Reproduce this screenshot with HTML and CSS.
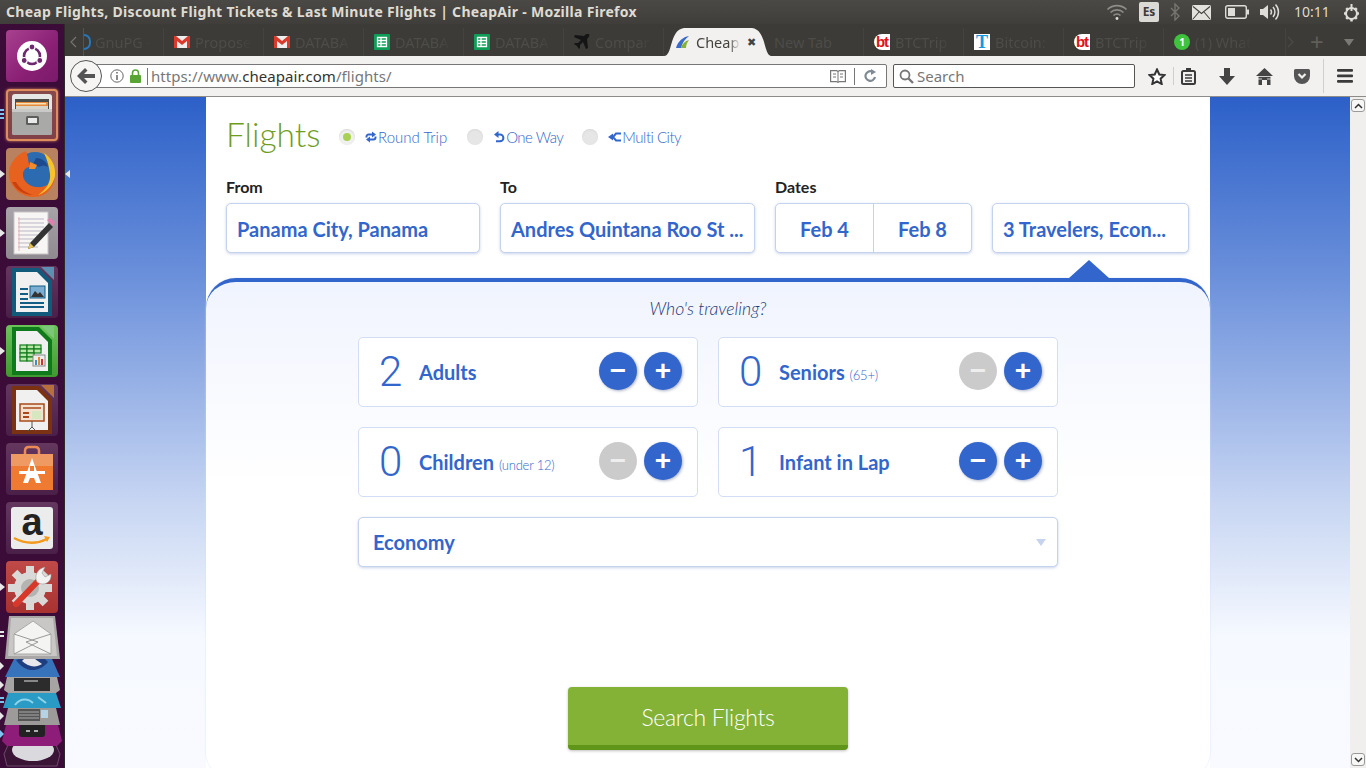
FILE: index.html
```html
<!DOCTYPE html>
<html lang="en">
<head>
<meta charset="utf-8">
<title>Cheap Flights</title>
<link rel="stylesheet" href="styles.css">
</head>
<body>
<div class="desktop">
  <header class="topbar">
    <div class="wintitle">Cheap Flights, Discount Flight Tickets &amp; Last Minute Flights | CheapAir - Mozilla Firefox</div>
    <div class="indicators">
      <svg class="ind-wifi" width="22" height="18" viewBox="0 0 22 18" fill="none" stroke="#8f8d88" stroke-width="1.6"><path d="M1.5 6.5a13.5 13.5 0 0 1 19 0"/><path d="M4.5 9.5a9.3 9.3 0 0 1 13 0"/><path d="M7.5 12.5a5 5 0 0 1 7 0"/><circle cx="11" cy="15.5" r="1.4" fill="#e0ded8" stroke="none"/></svg>
      <span class="ind-es">Es</span>
      <svg class="ind-bt" width="10" height="18" viewBox="0 0 10 18" fill="none" stroke="#77756f" stroke-width="1.4"><path d="M1 5l8 8-4 4V1l4 4-8 8"/></svg>
      <svg class="ind-mail" width="19" height="15" viewBox="0 0 19 15"><rect width="19" height="15" rx="1.5" fill="#e4e2dc"/><path d="M1 1.5l8.500 7 8.500-7M1 14l6-7M18 14l-6-7" fill="none" stroke="#44433f" stroke-width="1.1"/></svg>
      <svg class="ind-bat" width="24" height="14" viewBox="0 0 24 14"><rect x=".7" y=".7" width="20.600" height="12.600" rx="2" fill="none" stroke="#dfddd7" stroke-width="1.400"/><rect x="3" y="3" width="7" height="8" fill="#dfddd7"/><rect x="22" y="4.500" width="2" height="5" fill="#dfddd7"/></svg>
      <svg class="ind-vol" width="21" height="18" viewBox="0 0 21 18" fill="none" stroke="#dfddd7" stroke-width="1.500"><path d="M1 6h3l5-4v14l-5-4H1z" fill="#dfddd7" stroke="none"/><path d="M11.500 6.500a4 4 0 0 1 0 5M14 4a7.500 7.500 0 0 1 0 10M16.500 1.500a11 11 0 0 1 0 15"/></svg>
      <span class="ind-time">10:11</span>
      <svg class="ind-power" width="17" height="19" viewBox="0 0 17 19"><g fill="none" stroke="#dfddd7"><circle cx="8.500" cy="10.500" r="5.500" stroke-width="2"/><path d="M8.500 1v7" stroke-width="2"/></g><g stroke="#dfddd7" stroke-width="2.500"><path d="M8.500 15.500v3M1 10.500h3M13 10.500h3M3.200 5.200l2 2M11.800 13.800l2 2M13.800 5.200l-2 2M5.200 13.800l-2 2"/></g></svg>
    </div>
  </header>

  <div class="workarea">
    <nav class="launcher">
      <div class="lnch tile-ubuntu"><svg viewBox="0 0 52 52"><circle cx="26" cy="26" r="15" fill="#fff"/><circle cx="26" cy="26" r="8" fill="none" stroke="#6e2a6f" stroke-width="2.600"/><g fill="#6e2a6f" stroke="#fff" stroke-width="1.200"><circle cx="26" cy="17" r="3"/><circle cx="18.200" cy="30.500" r="3"/><circle cx="33.800" cy="30.500" r="3"/></g></svg></div>
      <div class="lnch tile-files"><span class="pips pips-blue"></span><svg viewBox="0 0 52 52"><path d="M6 8q0-3 3-3h34q3 0 3 3v13H6z" fill="#e6e6e6"/><rect x="9" y="10" width="34" height="12" fill="#4b4b48"/><rect x="10" y="13" width="32" height="6" fill="#e88a3c"/><rect x="10" y="14" width="30" height="1.500" fill="#f7e2b5"/><rect x="10" y="17" width="32" height="5" fill="#d9d4c8"/><rect x="6" y="20" width="40" height="26" rx="1.500" fill="#a9a9a7"/><rect x="6" y="20" width="40" height="3" fill="#c9c9c7"/><rect x="20" y="27" width="13" height="9" rx="1.500" fill="#5d5d5b"/><rect x="22" y="29" width="9" height="5" fill="#e9e9e9"/></svg></div>
      <div class="lnch tile-ff"><span class="pip-l"></span><span class="pip-r"></span><svg viewBox="0 0 52 52"><circle cx="29" cy="23" r="19" fill="#2d6bb0"/><path d="M30 10c6 0 11 4 12 9-3-2-6-2-9 0l-6-3z" fill="#1d4a8c"/><path d="M20 3C8 8 2 18 3 28c2 13 13 21 25 21 11 0 19-8 21-19-4 6-11 10-19 9-8-1-14-7-13-14 1-4 4-6 7-6-1-3-2-6-2-9z" fill="#e8621f"/><path d="M6 34c4 8 12 13 21 13-7-2-13-6-17-13z" fill="#c9410f"/><path d="M38 5c8 5 12 14 11 23-2 9-8 16-17 19 8-5 13-13 12-21-1-8-3-15-6-21z" fill="#f8c32a"/><path d="M24 14l7 3-2 4-6 0z" fill="#f08a2a"/></svg></div>
      <div class="lnch tile-text"><span class="pip-l"></span><svg viewBox="0 0 52 52"><rect x="8" y="5" width="34" height="42" fill="#f8f6f4" stroke="#c7c3c4"/><g stroke="#b9b7c2" stroke-width="1"><path d="M12 12h26M12 16h26M12 20h26M12 24h24M12 28h20M12 32h16M12 36h12M12 40h20"/></g><path d="M13 10v34" stroke="#e8a7ad" stroke-width=".8"/><path d="M24 36L43 16l4 4-19 20-6 2z" fill="#333"/><path d="M41 13l3-2 5 4-2 4z" fill="#e080ae"/><path d="M22 42l2-6 4 4z" fill="#e7c34d"/></svg></div>
      <div class="lnch tile-dark"><svg viewBox="0 0 52 52"><path d="M6 2h27l13 13v35H6z" fill="#115a7c"/><path d="M10 6h21l11 11v29H10z" fill="#f0f0f0"/><path d="M35 1h13v13z" fill="#5d90b0"/><path d="M14 22h8v2h-8zM14 27h8v2h-8zM14 32h8v2h-8zM14 36h24v2H14zM14 40h24v2H14z" fill="#125d85"/><rect x="24" y="20" width="15" height="12" fill="#7baed0" stroke="#125d85"/><path d="M25 31l4-6 3 3 2-2 4 5z" fill="#333"/></svg></div>
      <div class="lnch tile-calc"><span class="pip-l"></span><svg viewBox="0 0 52 52"><path d="M6 2h27l13 13v35H6z" fill="#0e7a1b"/><path d="M10 6h21l11 11v29H10z" fill="#f0f0f0"/><path d="M35 1h13v13z" fill="#7cc67c"/><g fill="#b8e8a8" stroke="#157d1f" stroke-width="1.200"><rect x="14" y="20" width="7" height="4"/><rect x="21" y="20" width="7" height="4"/><rect x="28" y="20" width="7" height="4"/><rect x="14" y="24" width="7" height="4"/><rect x="21" y="24" width="7" height="4"/><rect x="28" y="24" width="7" height="4"/><rect x="14" y="28" width="7" height="4"/><rect x="21" y="28" width="7" height="4"/><rect x="14" y="32" width="7" height="4"/><rect x="21" y="32" width="7" height="4"/></g><rect x="27" y="30" width="12" height="11" fill="#eee" stroke="#888"/><rect x="29" y="35" width="2" height="5" fill="#3a8fcf"/><rect x="32" y="32" width="2" height="8" fill="#e88a2c"/><rect x="35" y="34" width="2" height="6" fill="#c33"/></svg></div>
      <div class="lnch tile-dark"><svg viewBox="0 0 52 52"><path d="M6 2h27l13 13v35H6z" fill="#7a3212"/><path d="M10 6h21l11 11v29H10z" fill="#f0f0f0"/><path d="M35 1h13v13z" fill="#b86f3e"/><rect x="14" y="20" width="24" height="17" fill="#f4e2d0" stroke="#a84a1a" stroke-width="1.500"/><path d="M17 24h18" stroke="#a84a1a" stroke-width="1.500"/><path d="M17 28h6v2h-6zM17 32h6v2h-6z" fill="#a84a1a"/><rect x="26" y="27" width="9" height="8" fill="#d7e8c0"/><path d="M26 43l-4 4M26 43l4 4M26 37v6" stroke="#555"/></svg></div>
      <div class="lnch tile-dark"><svg viewBox="0 0 52 52"><path d="M19 12V8q0-4 4-4h6q4 0 4 4v4" fill="none" stroke="#ea8b57" stroke-width="2.500"/><path d="M5 11h42v36H5z" fill="#ef7b33"/><path d="M5 11h42v12H5z" fill="#f09a63"/><path d="M26 15l-9 25h5l2-5h4l2 5h5z" fill="#fff"/><rect x="13" y="28" width="26" height="3" fill="#fff"/><rect x="24" y="23" width="4" height="5" fill="#ef7b33"/></svg></div>
      <div class="lnch tile-dark"><svg viewBox="0 0 52 52"><rect x="5" y="5" width="42" height="42" rx="3" fill="#ececec"/><text x="26" y="33" class="amz">a</text><path d="M8 36q17 9 33 1" fill="none" stroke="#f39a1d" stroke-width="2.500"/><path d="M38 34l6 1-3 5z" fill="#f39a1d"/></svg></div>
      <div class="lnch tile-set"><span class="pip-l"></span><svg viewBox="0 0 52 52"><g stroke="#d9d9d7" stroke-width="8"><path d="M24 5v8M24 41v8M2 27h8M38 27h8M8.500 11.500l6 6M33.500 36.500l6 6M8.500 42.500l6-6M39.500 11.500l-6 6"/></g><circle cx="24" cy="27" r="16" fill="#d9d9d7"/><circle cx="24" cy="27" r="9" fill="#b4b4b2"/><path d="M10 43L33 19" stroke="#d8382a" stroke-width="6" stroke-linecap="round"/><path d="M31 21c-3-6 0-13 8-15l-3 6 3 4 6-3c1 8-7 13-14 8z" fill="#f2f2f2" stroke="#999" stroke-width=".6"/></svg></div>
      <div class="stack">
        <span class="st-pip st-p1"></span><span class="st-pip st-p2"></span><span class="st-pip st-p3"></span><span class="st-pip st-p4"></span><span class="st-pip st-p5"></span><span class="st-pip st-p6"></span>
        <svg width="65" height="153" viewBox="0 0 65 153">
          <path d="M9 128h46l5 11-3 12H7l-3-12z" fill="#3a1536" stroke="#6d4a68"/>
          <ellipse cx="33" cy="135" rx="21" ry="11" fill="#d9d9de"/>
          <path d="M6 110h52l4 16-5 5H7l-5-5z" fill="#8e1d7a"/>
          <rect x="19" y="108" width="26" height="14" rx="3" fill="#222"/><path d="M26 116h4M34 116h4" stroke="#ddd" stroke-width="1.500"/>
          <path d="M8 93h48l4 17H4z" fill="#9c9b99"/>
          <rect x="18" y="94" width="22" height="12" fill="#555"/><rect x="41" y="95" width="7" height="8" fill="#b7d3e3"/><path d="M19 97h20M19 100h20M19 103h20" stroke="#aaa"/>
          <path d="M8 78h48l5 15H3z" fill="#2a9bc4"/><path d="M15 90c6-8 14-6 18-2M38 82l8 6" stroke="#8fd4ea" stroke-width="2" fill="none"/>
          <path d="M7 62h50l3 13-4 3H8l-4-3z" fill="#a6a5a3"/><rect x="14" y="63" width="36" height="13" fill="#2c2c2c"/><rect x="24" y="65" width="14" height="2" fill="#888"/>
          <path d="M14 44h38l8 18H5z" fill="#3773bb"/><path d="M16 45c8 12 22 14 32 2l-3-3H19z" fill="#1f3e80"/><path d="M22 46c6 6 14 7 20 3l-7-5H24z" fill="#e8e8ec"/>
          <path d="M9 1h46l5 43H5z" fill="#a8a7a5"/><path d="M11 3h42l4 38H8z" fill="#c8c7c5"/>
          <path d="M14 19L33 6l18 13v20H14z" fill="#f4f4f2" stroke="#aaa"/><path d="M14 19l24 8-24 12M51 19L26 27l25 12" fill="none" stroke="#999"/>
        </svg>
      </div>
    </nav>

    <div class="browser">
      <div class="tabbar">
        <div class="tab-scroll-l"><svg width="8" height="12" viewBox="0 0 8 12" fill="none" stroke="#75746f" stroke-width="1.200"><path d="M6 1L1 6l5 5"/></svg></div>
        <div class="tab tab-first"><span class="ico-half"></span><span class="tab-label">GnuPG -</span></div>
        <div class="tab"><svg class="fav" viewBox="0 0 16 16"><rect y="2" width="16" height="12" fill="#eee"/><path d="M0 2h2l6 5 6-5h2v12h-3V7L8 11 3 7v7H0z" fill="#d93a2b"/></svg><span class="tab-label">Propose</span></div>
        <div class="tab"><svg class="fav" viewBox="0 0 16 16"><rect y="2" width="16" height="12" fill="#eee"/><path d="M0 2h2l6 5 6-5h2v12h-3V7L8 11 3 7v7H0z" fill="#d93a2b"/></svg><span class="tab-label">DATABA</span></div>
        <div class="tab"><svg class="fav" viewBox="0 0 16 16"><rect width="16" height="16" rx="1" fill="#0f9d58"/><path d="M3.500 3.500h9v9h-9zM3.500 6.500h9M3.500 9.500h9M7 3.500v9" fill="none" stroke="#fff" stroke-width="1.300"/></svg><span class="tab-label">DATABA</span></div>
        <div class="tab"><svg class="fav" viewBox="0 0 16 16"><rect width="16" height="16" rx="1" fill="#0f9d58"/><path d="M3.500 3.500h9v9h-9zM3.500 6.500h9M3.500 9.500h9M7 3.500v9" fill="none" stroke="#fff" stroke-width="1.300"/></svg><span class="tab-label">DATABA</span></div>
        <div class="tab"><svg class="fav" viewBox="0 0 16 16"><path d="M15 0c1 1 0 3-2 5l1 9-2 1-3-7-3 3v3l-1 1-2-3-3-2 1-1h3l3-3-7-3 1-2 9 1c2-2 4-3 5-2z" fill="#151515"/></svg><span class="tab-label">Compar</span></div>
        <div class="tab tab-active"><svg class="fav" viewBox="0 0 16 16"><path d="M1 14C3 7 8 3 14 2 10 5 7 9 6 14z" fill="#3a6bc8"/><path d="M6 14c1-4 4-7 8-8-2 3-3 5-3 8z" fill="#86b23a"/></svg><span class="tab-label tab-label-active">Cheap</span><span class="tab-x">✖</span></div>
        <div class="tab tab-plain"><span class="tab-label tab-label-plain">New Tab</span></div>
        <div class="tab"><span class="fav fav-bt">bt</span><span class="tab-label">BTCTrip</span></div>
        <div class="tab"><span class="fav fav-t">T</span><span class="tab-label">Bitcoin:</span></div>
        <div class="tab"><span class="fav fav-bt">bt</span><span class="tab-label">BTCTrip</span></div>
        <div class="tab tab-wa"><span class="fav fav-wa">1</span><span class="tab-label">(1) What</span></div>
        <div class="tab-tools">
          <svg width="8" height="12" viewBox="0 0 8 12" fill="none" stroke="#4c4b47" stroke-width="1.200"><path d="M2 1l5 5-5 5"/></svg>
          <span class="tab-plus">+</span>
          <svg class="tab-more" width="10" height="7" viewBox="0 0 10 7"><path d="M0 0h10L5 7z" fill="#7a7974"/></svg>
        </div>
      </div>

      <div class="navbar">
        <button class="back"><svg width="18" height="16" viewBox="0 0 18 16"><path d="M8 0l2.500 2.500L7 6h11v4H7l3.500 3.500L8 16 0 8z" fill="#555"/></svg></button>
        <div class="urlbar">
          <svg class="u-info" width="14" height="14" viewBox="0 0 14 14" fill="none" stroke="#666"><circle cx="7" cy="7" r="6.200"/><path d="M7 6v5M7 3v1.500" stroke-width="1.500"/></svg>
          <svg class="u-lock" width="11" height="14" viewBox="0 0 11 14"><path d="M2.500 6V4a3 3 0 0 1 6 0v2" fill="none" stroke="#58a535" stroke-width="1.600"/><rect y="6" width="11" height="8" rx="1" fill="#58a535"/></svg>
          <span class="u-sep"></span>
          <span class="u-text">https://www.<b>cheapair.com</b>/flights/</span>
          <svg class="u-read" width="16" height="13" viewBox="0 0 16 13" fill="#fff" stroke="#777" stroke-width="1.200"><path d="M.6.600h6l1.400 1 1.400-1h6v11h-6L8 12.400l-1.400-.8h-6z"/><path d="M8 2v10M3 4h3M3 7h3M10 4h3M10 7h3" stroke-width="1"/></svg>
          <span class="u-sep2"></span>
          <svg class="u-reload" width="13" height="14" viewBox="0 0 13 14" fill="none" stroke="#7f8a94" stroke-width="2.200"><path d="M11 8a4.800 4.800 0 1 1-3-5.500"/><path d="M7 0l5 3-5 3z" fill="#7f8a94" stroke="none"/></svg>
        </div>
        <div class="searchbar">
          <svg width="15" height="15" viewBox="0 0 15 15" fill="none" stroke="#777" stroke-width="1.800"><circle cx="6" cy="6" r="4.500"/><path d="M9.500 9.500L14 14" stroke-width="2.400"/></svg>
          <span>Search</span>
        </div>
        <div class="toolbar">
          <svg class="t-star" width="18" height="17" viewBox="0 0 18 17"><path d="M9 1.500l2.300 5 5.200.6-3.900 3.600 1.100 5.300L9 13.300 4.300 16l1.100-5.300L1.500 7.100l5.200-.6z" fill="#fff" stroke="#333" stroke-width="2"/></svg>
          <span class="t-sep"></span>
          <svg class="t-clip" width="15" height="17" viewBox="0 0 15 17"><rect x="1" y="3" width="13" height="13" rx="1.500" fill="none" stroke="#3a3a3a" stroke-width="2"/><rect x="5" y="0" width="5" height="4" fill="#3a3a3a"/><path d="M4 7h7M4 10h7M4 13h7" stroke="#3a3a3a" stroke-width="1.500"/></svg>
          <svg class="t-down" width="16" height="17" viewBox="0 0 16 17"><path d="M5 0h6v8h5l-8 9-8-9h5z" fill="#444"/></svg>
          <svg class="t-home" width="17" height="17" viewBox="0 0 17 17"><path d="M8.500 0L17 8h-2.500v9h-3.500v-5H6v5H2.500V8H0z" fill="#444"/><path d="M2 8.500h13M2 11h4M11 11h4" stroke="#f2f1f0" stroke-width=".8"/></svg>
          <svg class="t-pocket" width="16" height="15" viewBox="0 0 16 15"><path d="M1.500 0h13A1.500 1.500 0 0 1 16 1.500V7a8 8 0 0 1-16 0V1.500A1.500 1.500 0 0 1 1.500 0z" fill="#555"/><path d="M4.500 5L8 8.500 11.500 5" fill="none" stroke="#f2f1f0" stroke-width="2.200"/></svg>
          <span class="t-sep t-sep2"></span>
          <svg class="t-menu" width="16" height="14" viewBox="0 0 16 14" fill="#3a3a3a"><rect width="16" height="2.800" rx="1"/><rect y="5.500" width="16" height="2.800" rx="1"/><rect y="11" width="16" height="2.800" rx="1"/></svg>
        </div>
      </div>

      <div class="viewport">
        <main class="page">
          <div class="card">
            <div class="heading">
              <h1>Flights</h1>
              <label class="radio radio-on"><span class="dot"></span><svg class="trip" width="12" height="12" viewBox="0 0 12 12"><g fill="none" stroke="#3366cc" stroke-width="2"><path d="M1.500 6.500V5.500A2 2 0 0 1 3.500 3.500H7.500"/><path d="M10.500 5.500V6.500A2 2 0 0 1 8.500 8.500H4.500"/></g><path d="M7 .5L11 3.500 7 6.500zM5 5.500L1 8.500 5 11.500z" fill="#3366cc"/></svg>Round Trip</label>
              <label class="radio r-tight"><span class="dot"></span><svg class="trip" width="12" height="12" viewBox="0 0 12 12"><path d="M5 3.500H7a3.200 3.200 0 0 1 0 6.800H3" fill="none" stroke="#3366cc" stroke-width="2"/><path d="M5.500 0v7L1 3.500z" fill="#3366cc"/></svg>One Way</label>
              <label class="radio r-tight"><span class="dot"></span><svg class="trip" width="13" height="12" viewBox="0 0 13 12"><path d="M13 2.500H8L5 6l3 3.500h5" fill="none" stroke="#3366cc" stroke-width="2"/><path d="M0 6l5-3.500v7z" fill="#3366cc"/></svg>Multi City</label>
            </div>
            <div class="fields">
              <div class="field f-from"><span class="flabel">From</span><div class="fbox">Panama City, Panama</div></div>
              <div class="field f-to"><span class="flabel">To</span><div class="fbox">Andres Quintana Roo St ...</div></div>
              <div class="field f-dates"><span class="flabel">Dates</span><div class="fbox fbox-dates"><span>Feb 4</span><span>Feb 8</span></div></div>
              <div class="field f-trav"><div class="fbox">3 Travelers, Econ...</div></div>
            </div>
            <section class="panel">
              <span class="caret"></span>
              <p class="who">Who's traveling?</p>
              <div class="counters">
                <div class="counter"><span class="num">2</span><span class="cname">Adults</span><span class="btns"><button class="rbtn">−</button><button class="rbtn">+</button></span></div>
                <div class="counter"><span class="num">0</span><span class="cname">Seniors <small>(65+)</small></span><span class="btns"><button class="rbtn off">−</button><button class="rbtn">+</button></span></div>
                <div class="counter"><span class="num">0</span><span class="cname">Children <small>(under 12)</small></span><span class="btns"><button class="rbtn off">−</button><button class="rbtn">+</button></span></div>
                <div class="counter"><span class="num">1</span><span class="cname">Infant in Lap</span><span class="btns"><button class="rbtn">−</button><button class="rbtn">+</button></span></div>
                <div class="cabin"><span>Economy</span><svg width="10" height="7" viewBox="0 0 10 7"><path d="M0 0h10L5 7z" fill="#c5d3ee"/></svg></div>
              </div>
              <button class="go">Search Flights</button>
            </section>
          </div>
        </main>
        <div class="scrollbar">
          <span class="sb-btn"><svg width="9" height="6" viewBox="0 0 9 6" fill="none" stroke="#333" stroke-width="1.500"><path d="M1 5l3.500-3.500L8 5"/></svg></span>
          <span class="sb-btn"><svg width="9" height="6" viewBox="0 0 9 6" fill="none" stroke="#333" stroke-width="1.500"><path d="M1 1l3.500 3.500L8 1"/></svg></span>
        </div>
      </div>
    </div>
  </div>
</div>
</body>
</html>
```
FILE: styles.css
```css
* { box-sizing: border-box; }
html, body { margin: 0; padding: 0; height: 100%; overflow: hidden; }
body { font-family: "Lato", "Noto Sans", sans-serif; background: #3c0c38; }
button { font: inherit; border: 0; padding: 0; }
p, h1 { margin: 0; }

.desktop { width: 1366px; height: 768px; display: flex; flex-direction: column; overflow: hidden; }

/* Unity top panel */
.topbar { height: 24px; flex: none; display: flex; align-items: center; justify-content: space-between; background: linear-gradient(#4a4945, #3f3e3a); color: #dfdbd2; }
.wintitle { margin-left: 6px; font: 700 14px/24px "Noto Sans", sans-serif; letter-spacing: .3px; white-space: nowrap; }
.indicators { display: flex; align-items: center; height: 24px; }
.ind-wifi { margin-right: 11px; }
.ind-es { width: 20px; height: 20px; background: #dcdad4; color: #3c3b37; border-radius: 2px; font: 700 12px/20px "Noto Sans", sans-serif; text-align: center; margin-right: 11px; }
.ind-bt { margin-right: 12px; }
.ind-mail { margin-right: 14px; }
.ind-bat { margin-right: 10px; }
.ind-vol { margin-right: 14px; }
.ind-time { font: 400 14px/24px "Noto Sans", sans-serif; color: #dfdbd2; width: 34px; margin-right: 15px; }
.ind-power { margin-right: 6px; }

.workarea { flex: 1; display: flex; min-height: 0; }

/* launcher */
.launcher { width: 65px; flex: none; background: #3c0c38; border-right: 1px solid #2a2a28; padding: 6px 0 0 6px; display: flex; flex-direction: column; gap: 7px; position: relative; }
.lnch { width: 52px; height: 52px; border-radius: 4px; position: relative; flex: none; }
.lnch svg { display: block; width: 52px; height: 52px; }
.tile-ubuntu { background: linear-gradient(135deg, #a8418f, #8a1f74 60%, #7a1a6a); }
.tile-files { background: linear-gradient(#874a4c, #804048); box-shadow: inset 0 0 0 2px #e08d5e, 0 0 3px #d68a5c; }
.tile-ff { background: #b8815f; }
.tile-text { background: linear-gradient(#a8a3a8, #8f8a90); }
.tile-dark { background: linear-gradient(#64375f, #4a1f48); }
.tile-calc { background: linear-gradient(#6cc35a, #3f9a30); }
.tile-set { background: linear-gradient(#c04a48, #a8322f); }
.amz { font: 700 38px "Liberation Sans", sans-serif; fill: #222; text-anchor: middle; }
.pip-l, .pip-r { position: absolute; top: 22px; border: 4px solid transparent; }
.pip-l { left: -6px; border-left: 5px solid #e8e8e8; }
.pip-r { right: -12px; border-right: 5px solid #e8e8e8; }
.pips { position: absolute; left: -6px; top: 20px; width: 4px; height: 10px; background: repeating-linear-gradient(#7ec3ee 0 2px, transparent 2px 4px); }
.stack { flex: none; margin: -5px 0 0 -6px; position: relative; }
.stack svg { display: block; }
.st-pip { position: absolute; left: 0; border: 4px solid transparent; border-left: 4px solid #e8e8e8; }
.st-p1 { top: 16px; width: 4px; height: 8px; border: 0; background: repeating-linear-gradient(#e8e8e8 0 2px, transparent 2px 4px); }
.st-p2 { top: 47px; }
.st-p3 { top: 66px; }
.st-p4 { top: 82px; width: 4px; height: 8px; border: 0; background: repeating-linear-gradient(#7ec3ee 0 2px, transparent 2px 4px); }
.st-p5 { top: 97px; }
.st-p6 { top: 115px; border-left-color: #7ec3ee; }

/* browser */
.browser { flex: 1; min-width: 0; display: flex; flex-direction: column; }
.tabbar { height: 32px; flex: none; padding-top: 4px; background: #3c3b37; display: flex; align-items: stretch; color: #4d4c48; font: 400 14.5px/28px "Noto Sans", sans-serif; }
.tab-scroll-l { width: 19px; display: flex; align-items: center; padding-left: 5px; border-right: 1px solid #55544f; }
.tab { width: 100px; flex: none; display: flex; align-items: center; padding-left: 10px; gap: 5px; overflow: hidden; border-right: 1px solid #44433f; }
.tab-first { width: 80px; padding-left: 0; gap: 4px; }
.ico-half { width: 7px; height: 16px; border: 2px solid #2a77b8; border-left: 0; border-radius: 0 9px 9px 0; flex: none; }
.tab-label { white-space: nowrap; width: 58px; overflow: hidden; mask-image: linear-gradient(90deg, #000 75%, transparent); -webkit-mask-image: linear-gradient(90deg, #000 75%, transparent); }
.fav { width: 16px; height: 16px; flex: none; display: block; }
.tab-active { width: 108px; background: #f2f1f0; border: 0; color: #44443f; padding-left: 11px; clip-path: path("M0 28C9 28 5 2 20 0H88C103 2 99 28 108 28Z"); }
.tab-label-active { width: 44px; }
.tab-x { font-size: 11px; color: #444; margin-left: 2px; }
.tab-plain { width: 92px; padding-left: 2px; }
.tab-label-plain { width: 72px; mask-image: none; -webkit-mask-image: none; }
.tab-wa { width: 122px; }
.fav-bt { background: #fff; border-radius: 8px 0 0 8px; color: #e0121a; font: 700 15px/15px "Liberation Sans", sans-serif; text-align: center; letter-spacing: -1px; overflow: hidden; }
.fav-t { background: #fff; color: #0f9ce0; font: 700 18px/16px "Liberation Serif", serif; text-align: center; }
.fav-wa { background: #3fc33f; border-radius: 50%; color: #fff; font: 700 10px/16px "Noto Sans", sans-serif; text-align: center; }
.tab-tools { display: flex; align-items: center; gap: 14px; padding-left: 0; }
.tab-plus { font: 400 24px/28px "Noto Sans", sans-serif; color: #5f5e59; margin-left: 2px; }
.tab-more { margin-left: 6px; }

.navbar { height: 41px; flex: none; background: #f2f1f0; border-bottom: 1px solid #8d8c88; display: flex; align-items: center; padding-left: 5px; position: relative; }
.back { width: 32px; height: 32px; border-radius: 50%; background: #f6f5f4; border: 1px solid #555; position: relative; z-index: 1; display: flex; align-items: center; justify-content: center; flex: none; }
.urlbar { width: 802px; height: 24px; margin-left: -17px; background: #fff; border: 1px solid #777; border-radius: 2px; display: flex; align-items: center; padding-left: 24px; font: 400 15px/22px "Noto Sans", sans-serif; color: #777; }
.u-info { flex: none; }
.u-lock { margin-left: 6px; flex: none; }
.u-sep { width: 1px; height: 17px; background: #777; margin: 0 3px 0 6px; }
.u-text { flex: 1; white-space: nowrap; letter-spacing: .06px; }
.u-text b { font-weight: 400; color: #333; }
.u-read { margin-right: 8px; }
.u-sep2 { width: 1px; height: 17px; background: #777; margin-right: 9px; }
.u-reload { margin-right: 9px; }
.searchbar { width: 242px; height: 24px; margin-left: 6px; background: #fff; border: 1px solid #555; border-radius: 2px; display: flex; align-items: center; padding-left: 5px; gap: 3px; font: 400 15px/22px "Noto Sans", sans-serif; color: #777; }
.toolbar { display: flex; align-items: center; height: 40px; }
.t-star { margin-left: 13px; }
.t-sep { width: 1px; height: 18px; background: #d0cfcc; margin-left: 7px; }
.t-clip { margin-left: 7px; }
.t-down { margin-left: 23px; }
.t-home { margin-left: 21px; }
.t-pocket { margin-left: 21px; }
.t-sep2 { height: 34px; margin-left: 13px; }
.t-menu { margin-left: 13px; }

.viewport { flex: 1; min-height: 0; display: flex; overflow: hidden; }
.page { flex: 1; min-width: 0; background: linear-gradient(#2c60c8 0, #6f93dc 190px, #c9d7f3 410px, #f6f9ff 540px, #f8faff 100%); display: flex; justify-content: center; }
.card { width: 1004px; height: 684px; flex: none; background: #fff; padding-top: 18px; color: #3366cc; display: flex; flex-direction: column; margin-left: 1px; }
.heading { display: flex; align-items: center; height: 40px; padding-left: 20px; }
h1 { font: 300 33.5px/40px "Lato", sans-serif; color: #6f9c1c; width: 113px; margin-top: -2px; }
.radio { display: flex; align-items: center; font: 300 15px/20px "Lato", sans-serif; color: #3366cc; margin-right: 20px; margin-top: 4px; }
.r-tight { letter-spacing: -.5px; margin-right: 19px; }
.dot { width: 16px; height: 16px; border-radius: 50%; background: #e6e6e6; box-shadow: inset 0 1px 2px #d8d8d8; margin-right: 10px; flex: none; position: relative; }
.radio-on .dot { background: #f0f0f0; }
.radio-on .dot::after { content: ""; position: absolute; left: 4px; top: 4px; width: 8px; height: 8px; border-radius: 50%; background: #a8d052; }
.trip { margin-right: 1px; }

.fields { display: flex; gap: 20px; padding: 22px 0 0 20px; height: 123px; }
.field { display: flex; flex-direction: column; }
.f-from { width: 254px; }
.f-to { width: 255px; }
.f-dates, .f-trav { width: 197px; }
.f-trav { padding-top: 26px; }
.flabel { font: 700 16px/20px "Lato", sans-serif; color: #222; margin-bottom: 6px; }
.fbox { height: 50px; border: 1px solid #c5d2ee; border-radius: 5px; box-shadow: 0 1px 3px rgba(80,110,180,.3); background: #fff; padding-left: 10px; font: 700 20px/50px "Lato", sans-serif; color: #3366cc; white-space: nowrap; }
.fbox-dates { padding: 0; display: flex; }
.fbox-dates span { flex: none; width: 97px; text-align: center; }
.fbox-dates span + span { width: 98px; border-left: 1px solid #c5d2ee; }

.panel { flex: 1; position: relative; margin-top: 0; border-top: 4px solid #3366cc; border-radius: 30px; background: linear-gradient(#f0f4fe, #fff 205px); box-shadow: 0 0 2px #cfdcf5; display: flex; flex-direction: column; align-items: center; }
.caret { position: absolute; left: 863px; top: -22px; border: 20px solid transparent; border-top: 0; border-bottom: 18px solid #3366cc; }
.who { font: italic 300 17.7px/22px "Lato", sans-serif; color: #1f3a78; margin-top: 16px; }
.counters { display: grid; grid-template-columns: 340px 340px; gap: 20px; margin-top: 17px; }
.counter { height: 70px; background: #fff; border: 1px solid #d3ddf4; border-radius: 5px; display: flex; align-items: center; padding-left: 20px; }
.num { font: 300 42px/70px "Roboto", sans-serif; color: #3366cc; width: 40px; flex: none; }
.cname { font: 700 20px/72px "Lato", sans-serif; color: #3366cc; flex: 1; white-space: nowrap; }
.cname small { font: 300 13px "Lato", sans-serif; letter-spacing: -.2px; }
.btns { display: flex; gap: 7px; margin-right: 15px; margin-top: -2px; }
.rbtn { width: 38px; height: 38px; border-radius: 50%; background: #3366cc; color: #fff; box-shadow: 1px 1px 3px rgba(40,60,110,.4); font: 700 28px/36px "Liberation Sans", sans-serif; text-align: center; }
.rbtn.off { background: #cbcbcb; color: #eee; box-shadow: none; }
.cabin { grid-column: 1 / 3; height: 50px; background: #fff; border: 1px solid #c5d2ee; border-radius: 5px; box-shadow: 0 1px 3px rgba(80,110,180,.3); display: flex; align-items: center; justify-content: space-between; padding: 0 11px 0 14px; font: 700 20px/50px "Lato", sans-serif; color: #3366cc; }
.go { width: 280px; height: 63px; margin-top: 120px; background: #84b237; border-bottom: 5px solid #5f9518; border-radius: 4px; box-shadow: 0 1px 3px rgba(0,0,0,.25); color: #fff; font: 300 23px/60px "Lato", sans-serif; letter-spacing: -.3px; flex: none; }

.scrollbar { width: 16px; flex: none; background: #f0efee; display: flex; flex-direction: column; justify-content: space-between; padding: 2px 0; }
.sb-btn { height: 13px; width: 14px; margin-left: 1px; background: #f7f7f6; border: 1px solid #999; border-radius: 3px; display: flex; align-items: center; justify-content: center; }
```
